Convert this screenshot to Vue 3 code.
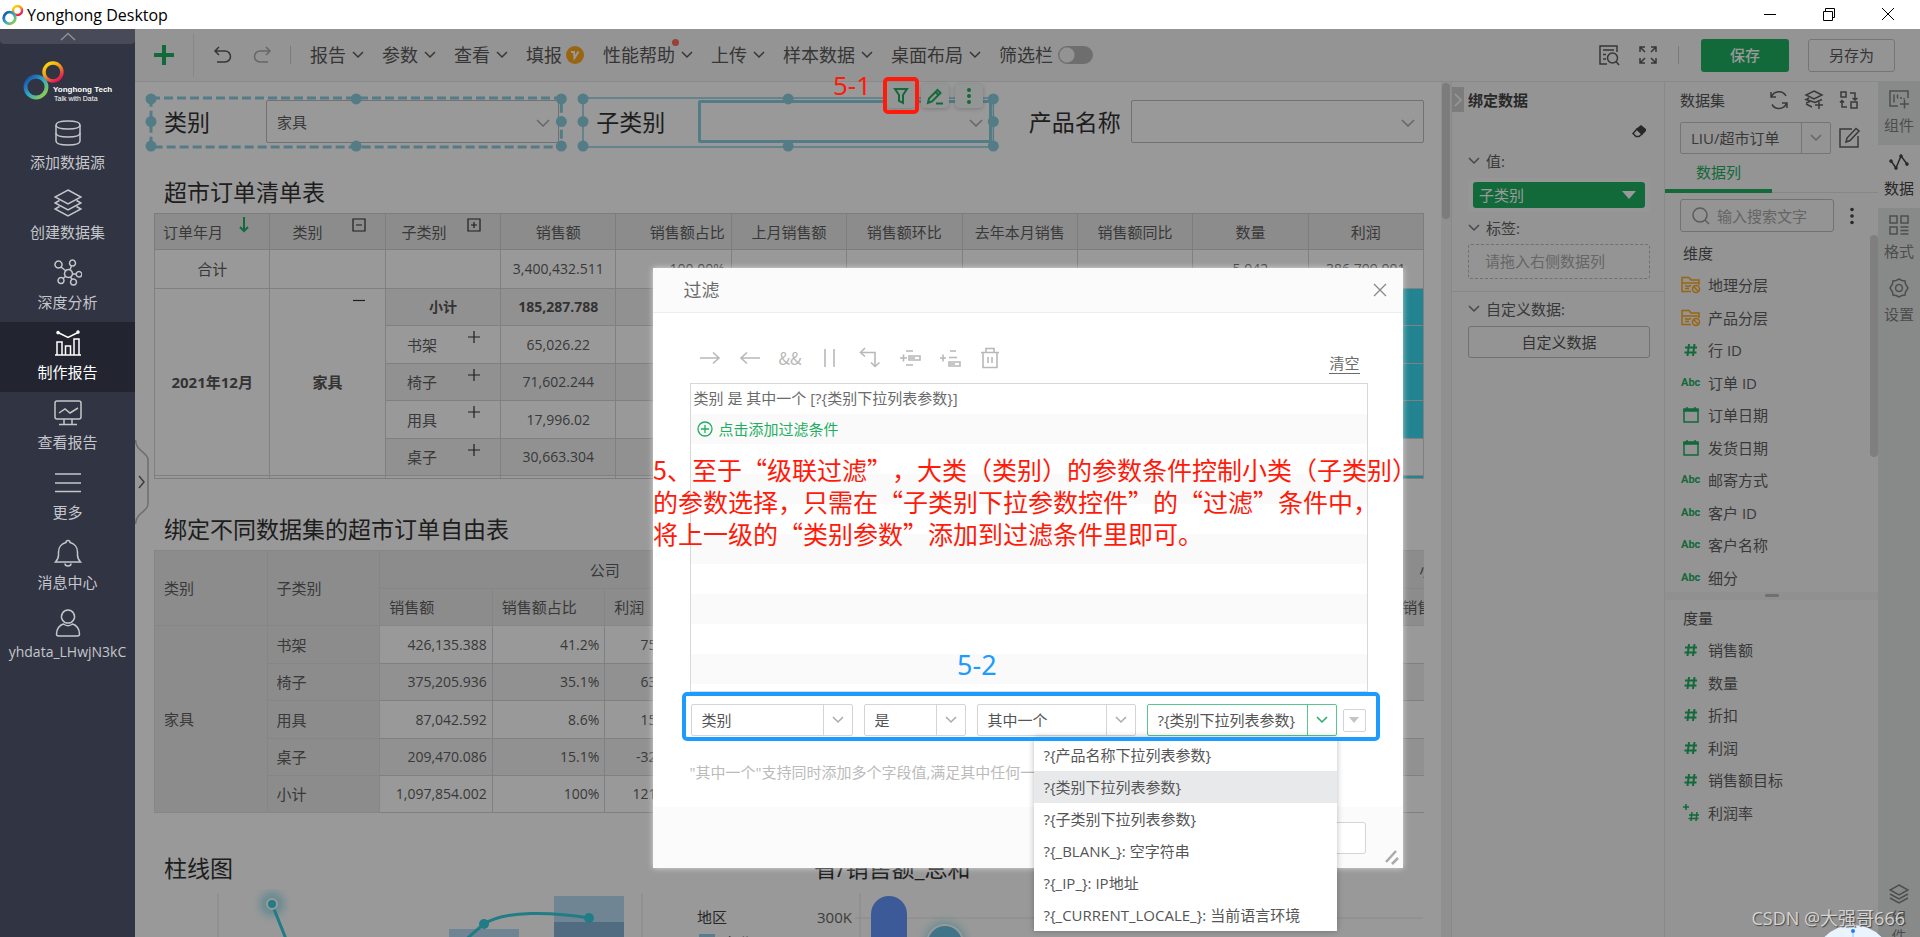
<script setup>
import { ref } from 'vue'

const navItems = [
  { label: '添加数据源', icon: ['M2 6c0-2.6 5-4 12-4s12 1.400 12 4-5 4-12 4S2 8.600 2 6z', 'M2 6v16c0 2.600 5 4 12 4s12-1.400 12-4V6', 'M2 14c0 2.600 5 4 12 4s12-1.400 12-4'] },
  { label: '创建数据集', icon: ['M14 1l13 7-13 7L1 8z', 'M5.500 11.500L1 14l13 7 13-7-4.500-2.500', 'M5.500 17.500L1 20l13 7 13-7-4.500-2.500'] },
  { label: '深度分析', icon: ['M14.500 10.500a4 4 0 1 0 .01 0z', 'M4.500 2a3.500 3.500 0 1 0 .01 0z', 'M18.500 1a3 3 0 1 0 .01 0z', 'M25 12.500a2.800 2.800 0 1 0 .01 0z', 'M7 18.500a3 3 0 1 0 .01 0z', 'M19.500 20a3 3 0 1 0 .01 0z', 'M7 8l5 4M17.500 7l-1.500 3.500M18.500 15h3.500M9 19.500l3-2.500M18 20.500l-1.500-2.500'] },
  { label: '制作报告', active: true, icon: ['M1 26h26', 'M3 26V13h5v13M11.500 26v-9h5v9M20 26V10h5v16', 'M4 3.500l10 5 10-5', 'M4 2.500a1 1 0 1 0 .01 0zM24 2a1 1 0 1 0 .01 0z'] },
  { label: '查看报告', icon: ['M3 2h22a2 2 0 0 1 2 2v14a2 2 0 0 1-2 2H3a2 2 0 0 1-2-2V4a2 2 0 0 1 2-2z', 'M5 14l6-4 5 4 8-5', 'M10 20v5M18 20v5M5 25.500h18'] },
  { label: '更多', icon: ['M1 5h26M1 14h26M1 22.500h26'] },
  { label: '消息中心', icon: ['M1.500 23c2-2 3-3.500 3-7v-3c0-5 3.500-8.500 7.500-9.500a2 2 0 0 1 4 0c4 1 7.500 4.500 7.500 9.500v3c0 3.500 1 5 3 7z', 'M11 24.500a3 2.500 0 0 0 6 0'] },
  { label: 'yhdata_LHwjN3kC', user: true, icon: ['M14 1a6.500 6.500 0 1 0 .01 0z', 'M4.500 27h19a2 2 0 0 0 2-2c0-5-3-9-7-10a7 7 0 0 1-9 0c-4 1-7 5-7 10a2 2 0 0 0 2 2z'] },
]

const menus = [
  { label: '报告' }, { label: '参数' }, { label: '查看' }, { label: '填报', badge: true },
  { label: '性能帮助', dot: true }, { label: '上传' }, { label: '样本数据' }, { label: '桌面布局' },
]

const plainHeads = ['上月销售额', '销售额环比', '去年本月销售', '销售额同比', '数量', '利润']
const orderRows = [
  { name: '书架', sales: '65,026.22' },
  { name: '椅子', sales: '71,602.244' },
  { name: '用具', sales: '17,996.02' },
  { name: '桌子', sales: '30,663.304' },
]
const freeRows = [
  { name: '书架', sales: '426,135.388', share: '41.2%', profit: '75,108.132' },
  { name: '椅子', sales: '375,205.936', share: '35.1%', profit: '63,402.276' },
  { name: '用具', sales: '87,042.592', share: '8.6%', profit: '15,218.672' },
  { name: '桌子', sales: '209,470.086', share: '15.1%', profit: '-32,041.654' },
  { name: '小计', sales: '1,097,854.002', share: '100%', profit: '121,687.426' },
]

const dimensions = [
  ['folder', '地理分层'], ['folder', '产品分层'], ['num', '行 ID'], ['abc', '订单 ID'], ['date', '订单日期'],
  ['date', '发货日期'], ['abc', '邮寄方式'], ['abc', '客户 ID'], ['abc', '客户名称'], ['abc', '细分'],
]
const measures = [
  ['num', '销售额'], ['num', '数量'], ['num', '折扣'], ['num', '利润'], ['num', '销售额目标'], ['calc', '利润率'],
]
const fieldGroups = [
  { title: '维度', items: dimensions, cls: 'dims' },
  { title: '度量', items: measures, cls: 'meas' },
]

const tabs = [
  { label: '组件', icon: ['M9 17H1V2h18v7', 'M5 5.500v8M8.500 5.500v4M12 8v2M15 9v1', 'M11 15h9M15.500 10.500v9'] },
  { label: '数据', active: true, icon: ['M2 9l5 7 5-12 6 8', 'M2 8a1 1 0 1 0 .01 0zM7 15a1 1 0 1 0 .01 0zM12 3a1 1 0 1 0 .01 0zM18 11a1 1 0 1 0 .01 0z'] },
  { label: '格式', icon: ['M1 1h7v7H1zM12 1h7v7h-7zM1 12h7v7H1z', 'M11.500 12h8M11.500 15.500h8M11.500 19h8'] },
  { label: '设置', icon: ['M10 1l3 1.500 3 .5.500 3L19 10l-2.500 4-.5 3-3 .5-3 1.500-3-1.500-3-.5-.5-3L1 10l2.500-4 .5-3 3-.5z', 'M10 6.500a3.500 3.500 0 1 0 .01 0z'] },
]

const tools = [
  { label: '右移', icon: ['M1 11h19M14 5.500l6 5.500-6 5.500'] },
  { label: '左移', icon: ['M21 11H2M8 5.500L2 11l6 5.500'] },
  { label: '与', text: '&&' },
  { label: '或', icon: ['M6 2v18M15 2v18'] },
  { label: '取反', icon: ['M6 1L1.500 5.500 6 9.500', 'M2 5.500h14V19', 'M12 15.500l4 4 4.500-4'] },
  { label: '同级添加', icon: ['M1 11h7M4.500 7.500v7', 'M7 4h7M7 18h7', 'M10 9h11v4H10z', 'M11 11h5'] },
  { label: '下级添加', icon: ['M1 11h6M4 7.500v7', 'M11 4h6M10 10.500h8', 'M10 15h11v4H10z', 'M11 17h5'] },
  { label: '删除', icon: ['M2 5.500h18M7 5V1.500h8V5M4 6v14.500h14V6M9 10v6M13 10v6'] },
]

const options = [
  '?{产品名称下拉列表参数}', '?{类别下拉列表参数}', '?{子类别下拉列表参数}',
  '?{_BLANK_}: 空字符串', '?{_IP_}: IP地址', '?{_CURRENT_LOCALE_}: 当前语言环境',
]
const selected = ref(options[1])
const filterBar = ref(false)
const keyword = ref('')
</script>

<template>
  <div class="app">
    <header class="titlebar">
      <svg class="brand" width="22" height="22" viewBox="0 0 22 22" fill="none">
        <defs>
          <linearGradient id="cool" x1="0" y1="0" x2="1" y2="1"><stop offset="0" stop-color="#1546a8" /><stop offset=".5" stop-color="#2fa9c9" /><stop offset="1" stop-color="#a4d233" /></linearGradient>
          <linearGradient id="warm" x1="0" y1="0" x2=".7" y2="1"><stop offset="0" stop-color="#ffe600" /><stop offset=".5" stop-color="#f39a1d" /><stop offset="1" stop-color="#ea1752" /></linearGradient>
        </defs>
        <circle cx="15.500" cy="6.500" r="4.500" stroke="url(#warm)" stroke-width="2.500" />
        <circle cx="7.500" cy="14" r="5.800" stroke="url(#cool)" stroke-width="2.800" />
      </svg>
      <span class="app-name">Yonghong Desktop</span>
      <div class="win">
        <button aria-label="最小化"><svg width="14" height="14"><path d="M1 7.500h12" /></svg></button>
        <button aria-label="还原"><svg width="14" height="14"><path d="M1.500 4.500h9v9h-9zM3.500 4V1.500h9v9H11" /></svg></button>
        <button aria-label="关闭"><svg width="14" height="14"><path d="M1 1l12 12M13 1L1 13" /></svg></button>
      </div>
    </header>

    <div class="body">
      <nav class="sidebar">
        <button class="nub" aria-label="收起"><svg width="16" height="9"><path d="M1 8l7-6.500L15 8" /></svg></button>
        <div class="logo">
          <svg width="92" height="42" viewBox="0 0 92 42" fill="none">
            <circle cx="30" cy="10" r="9" stroke="url(#warm)" stroke-width="3.500" />
            <circle cx="13" cy="25" r="10.500" stroke="url(#cool)" stroke-width="3.800" />
            <text x="30" y="30" class="logo-name">Yonghong Tech</text>
            <text x="31" y="39" class="logo-sub">Talk with Data</text>
          </svg>
        </div>
        <a v-for="n in navItems" :key="n.label" href="#" class="nav" :class="{ active: n.active, user: n.user }">
          <svg width="28" height="28" viewBox="0 0 28 28"><path v-for="d in n.icon" :key="d" :d="d" /></svg>
          <span>{{ n.label }}</span>
        </a>
      </nav>

      <main class="work">
        <div class="toolbar">
          <button class="add" aria-label="新建"><svg width="20" height="20"><path d="M10 0v20M0 10h20" /></svg></button>
          <i class="sep tall"></i>
          <div class="history">
            <button aria-label="撤销"><svg width="20" height="20"><path d="M6 2L2 6l4 4M2 6h10a5.500 5.500 0 0 1 0 11H4" /></svg></button>
            <button aria-label="重做" class="faint"><svg width="20" height="20"><path d="M14 2l4 4-4 4M18 6H8a5.500 5.500 0 0 0 0 11h8" /></svg></button>
          </div>
          <i class="sep"></i>
          <div class="menus">
            <button v-for="m in menus" :key="m.label" class="menu">
              {{ m.label }}
              <svg v-if="m.badge" class="vip" width="20" height="20"><circle cx="10" cy="10" r="9" /><path d="M6 7h3l.5 6 4-6.500" /></svg>
              <svg v-else width="12" height="8"><path d="M1 1l5 5 5-5" /></svg>
              <i v-if="m.dot" class="dot"></i>
            </button>
            <label class="switch">筛选栏 <input v-model="filterBar" type="checkbox" /></label>
          </div>
          <div class="actions">
            <button aria-label="预览"><svg width="22" height="22"><path d="M9 20H2V2h17v6M5 6h11M5 10.500h3M5 15h3" /><circle cx="14.500" cy="14" r="5" /><path d="M18 17.500l3 3.500" /></svg></button>
            <button aria-label="全屏"><svg width="20" height="20"><path d="M2 7V2h5M2 2l5 5M13 2h5v5M18 2l-5 5M2 13v5h5M2 18l5-5M18 13v5h-5M18 18l-5-5" /></svg></button>
            <i class="sep"></i>
            <button class="save">保存</button>
            <button class="save-as">另存为</button>
          </div>
        </div>

        <div class="panes">
          <section class="canvas">
            <div class="params">
              <div class="param">
                <label for="p1">类别</label>
                <div class="pick"><select id="p1"><option>家具</option></select><svg width="14" height="8"><path d="M1 1l6 6 6-6" /></svg></div>
                <svg class="sel"><rect width="100%" height="100%" class="dash" /><template v-for="x in ['0', '50%', '100%']" :key="x"><circle v-for="y in (x === '50%' ? ['2%', '98%'] : ['2%', '48%', '98%'])" :key="y" :cx="x" :cy="y" r="5.500" /></template></svg>
              </div>
              <div class="param">
                <label for="p2">子类别</label>
                <div class="pick focus"><select id="p2"><option></option></select><svg width="14" height="8"><path d="M1 1l6 6 6-6" /></svg></div>
                <svg class="sel"><rect width="100%" height="100%" /><template v-for="x in ['0', '50%', '100%']" :key="x"><circle v-for="y in (x === '50%' ? ['2%', '98%'] : ['2%', '48%', '98%'])" :key="y" :cx="x" :cy="y" r="5.500" /></template></svg>
                <div class="quick">
                  <button aria-label="过滤"><svg width="18" height="18"><path d="M3 2h12l-4 6v8l-4-2V8z" /></svg></button>
                  <button aria-label="编辑"><svg width="18" height="18"><path d="M2 16l1-4.500L11.500 3l3 3L6 14.500 2 16zM9.500 5l3 3M10 16.500h7" /></svg></button>
                  <button aria-label="更多操作"><svg width="18" height="18" class="fill"><circle cx="9" cy="3" r="2" /><circle cx="9" cy="9" r="2" /><circle cx="9" cy="15" r="2" /></svg></button>
                </div>
              </div>
              <div class="param">
                <label for="p3">产品名称</label>
                <div class="pick"><select id="p3"><option></option></select><svg width="14" height="8"><path d="M1 1l6 6 6-6" /></svg></div>
              </div>
            </div>

            <h2 class="t1">超市订单清单表</h2>
            <div class="clip c1">
              <table class="orders">
                <thead>
                  <tr>
                    <th class="lead">订单年月<svg class="mark arrow" width="12" height="16"><path d="M6 0v14M2 10l4 4 4-4" /></svg></th>
                    <th class="iconed">类别<svg class="mark" width="14" height="14"><path d="M1 1h12v12H1zM4 7h6" /></svg></th>
                    <th class="iconed">子类别<svg class="mark" width="14" height="14"><path d="M1 1h12v12H1zM4 7h6M7 4v6" /></svg></th>
                    <th>销售额</th>
                    <th class="end">销售额占比</th>
                    <th v-for="h in plainHeads" :key="h">{{ h }}</th>
                  </tr>
                </thead>
                <tbody>
                  <tr class="total"><td>合计</td><td></td><td></td><td>3,400,432.511</td><td class="end">100.00%</td><td></td><td></td><td></td><td></td><td>5,942</td><td>386,799.991</td></tr>
                  <tr class="sub">
                    <td rowspan="5" class="strong">2021年12月</td>
                    <td rowspan="5" class="strong">家具<svg class="mark" width="14" height="14"><path d="M1 7.500h12" /></svg></td>
                    <td class="strong alt">小计</td><td class="strong alt">185,287.788</td>
                    <td v-for="i in 6" :key="i" class="alt"></td><td class="teal"></td>
                  </tr>
                  <tr v-for="(r, i) in orderRows" :key="r.name">
                    <td class="item" :class="{ alt: i % 2 }">{{ r.name }}<svg class="mark" width="14" height="14"><path d="M1 7h12M7 1v12" /></svg></td>
                    <td :class="{ alt: i % 2 }">{{ r.sales }}</td>
                    <td v-for="k in 6" :key="k" :class="{ alt: i % 2 }"></td>
                    <td :class="i < 3 ? 'teal' : 'plain'"></td>
                  </tr>
                  <tr><td></td><td></td><td></td><td v-for="k in 7" :key="k"></td><td class="teal"></td></tr>
                </tbody>
              </table>
            </div>

            <h2 class="t2">绑定不同数据集的超市订单自由表</h2>
            <div class="clip c2">
              <table class="free">
                <thead>
                  <tr><th rowspan="2">类别</th><th rowspan="2">子类别</th><th colspan="4" class="mid">公司</th><th colspan="5"></th><th class="mid">小型企业</th></tr>
                  <tr><th>销售额</th><th>销售额占比</th><th>利润</th><th v-for="k in 6" :key="k"></th><th>销售额</th></tr>
                </thead>
                <tbody>
                  <tr v-for="(r, i) in freeRows" :key="r.name" :class="{ odd: i % 2 }">
                    <th v-if="!i" rowspan="5">家具</th><th>{{ r.name }}</th>
                    <td>{{ r.sales }}</td><td>{{ r.share }}</td><td>{{ r.profit }}</td><td v-for="k in 7" :key="k"></td>
                  </tr>
                </tbody>
              </table>
            </div>

            <div class="charts">
              <div>
                <h2>柱线图</h2>
                <svg class="plot">
                  <path d="M67 4v60M491 4v60" class="axis" />
                  <rect x="298" y="40" width="70" height="30" fill="#b9def5" /><rect x="403" y="7" width="70" height="27" fill="#b9def5" /><rect x="403" y="33" width="70" height="40" fill="#88b5d5" />
                  <circle cx="121" cy="15" r="12" class="glow" /><path d="M121 15l20 50M305 60c6-6 22-20 28-25 20-14 70-12 105-6" class="trend" />
                  <circle cx="121" cy="15" r="5" class="pt ring" /><circle cx="333" cy="35" r="5" class="pt" /><circle cx="438" cy="29" r="5" class="pt" />
                </svg>
              </div>
              <div class="second">
                <h2>省/销售额_总和</h2>
                <svg class="plot">
                  <path d="M199 4v60M194 29h568" class="axis" />
                  <text x="36" y="34" class="lg">地区</text><text x="62" y="60" class="lg">东北</text><text x="156" y="34">300K</text>
                  <rect x="38" y="45" width="16" height="16" fill="#98d0e8" />
                  <rect x="210" y="7" width="36" height="70" rx="18" fill="#6696fd" />
                  <circle cx="284" cy="54" r="21" class="glow" /><circle cx="284" cy="54" r="18" class="bubble" />
                </svg>
              </div>
            </div>
          </section>

          <div class="scroll"><i></i></div>

          <aside class="bind">
            <button class="fold" aria-label="收起面板"><svg width="8" height="14"><path d="M1 1l6 6-6 6" /></svg></button>
            <h3>绑定数据</h3>
            <button class="erase" aria-label="清除"><svg width="14" height="14"><path d="M5 4l4-3 5 4-4 4z" class="solid" /><path d="M5 4L1 8.500 4 11.500h3l3-2.500z" /></svg></button>
            <div class="fold-row"><svg width="12" height="8"><path d="M1 1l5 5 5-5" /></svg>值:</div>
            <div class="slot"><button class="pill">子类别<svg width="14" height="8"><path d="M0 0h14L7 8z" /></svg></button></div>
            <div class="fold-row"><svg width="12" height="8"><path d="M1 1l5 5 5-5" /></svg>标签:</div>
            <div class="drop">请拖入右侧数据列</div>
            <hr />
            <div class="fold-row last"><svg width="12" height="8"><path d="M1 1l5 5 5-5" /></svg>自定义数据:</div>
            <button class="custom">自定义数据</button>
          </aside>

          <aside class="dataset">
            <div class="ds-head">
              <span>数据集</span>
              <button aria-label="刷新"><svg width="20" height="20"><path d="M2.500 7A8 8 0 0 1 17 6M17.500 13A8 8 0 0 1 3 14.500M2 2v5h5M18 18v-5h-5" /></svg></button>
              <button aria-label="添加数据集"><svg width="20" height="20"><path d="M10 1l8 4-8 4-8-4zM5 8L2 9.500l9 3 7-3M2 14l6 3M2 13l4-1.500M11 15h8M15 11v8" /></svg></button>
              <button aria-label="切换"><svg width="20" height="20"><path d="M2 2h5v5H2zM12 12h6v6h-6zM11 3h5v7M13.500 8l2.500 2 2.500-2M8 17H3v-6M1 12.500L3 10.500l2 2" /></svg></button>
            </div>
            <div class="ds-pick">
              <div class="combo"><select aria-label="数据集"><option>LIU/超市订单</option></select><span><svg width="12" height="8"><path d="M1 1l5 5 5-5" /></svg></span></div>
              <button aria-label="编辑数据集"><svg width="22" height="22"><path d="M14 2H2v18h18V9M8 15l1-4L18 1.500l3 2.500-9 9.500z" /></svg></button>
            </div>
            <div class="ds-tabs"><button>数据列</button></div>
            <div class="ds-search">
              <div class="box"><svg width="18" height="18"><circle cx="8" cy="8" r="7" /><path d="M13 13l4 4" /></svg><input v-model="keyword" aria-label="搜索" placeholder="输入搜索文字" /></div>
              <button aria-label="更多"><svg width="6" height="18"><circle cx="3" cy="2.500" r="1.800" /><circle cx="3" cy="9" r="1.800" /><circle cx="3" cy="15.500" r="1.800" /></svg></button>
            </div>
            <div v-for="g in fieldGroups" :key="g.title" :class="g.cls">
              <h4>{{ g.title }}</h4>
              <ul>
                <li v-for="[kind, name] in g.items" :key="name">
                  <span class="kind" :class="kind">
                    <svg v-if="kind === 'folder'" width="20" height="18"><path d="M10 15.500H1V1.500h7l2 2.500h8v5M1 7h17M4 9.500l3 1 3-1M4 12.500h4" /><circle cx="15" cy="13" r="3.500" /><path d="M12.500 10.500l5 5" /></svg>
                    <svg v-else-if="kind === 'date'" width="16" height="16"><path d="M1 3h14v12H1z" /><path d="M1 2h14v2H1z" class="solid" /><path d="M4 0v3M12 0v3" /></svg>
                    <b v-else-if="kind === 'abc'">Abc</b>
                    <svg v-else-if="kind === 'num'" width="14" height="14"><path d="M5 1L3.500 13M10.500 1L9 13M1 4.500h12M.5 9.500h12" /></svg>
                    <svg v-else width="18" height="18"><path d="M4 0v6M1 3h6M10 8L9 17M15 8l-1 9M7 11h10M6.500 14.500h10" /></svg>
                  </span>{{ name }}
                </li>
              </ul>
              <i v-if="g.cls === 'dims'" class="thumb"></i>
            </div>
          </aside>

          <nav class="tabs">
            <a v-for="t in tabs" :key="t.label" href="#" :class="{ active: t.active }">
              <svg width="20" height="20" viewBox="0 0 20 20"><path v-for="d in t.icon" :key="d" :d="d" /></svg>{{ t.label }}
            </a>
            <a href="#" class="bottom"><svg width="20" height="20" viewBox="0 0 20 20"><path d="M10 1l9 5-9 5-9-5zM1 10l9 5 9-5M1 14l9 5 9-5" /></svg>组<br />件</a>
          </nav>
        </div>

        <button class="handle" aria-label="展开"><svg width="14" height="84"><path d="M.5 0C1 12 13 12 13 20v44C13 72 1 72 .5 84" /><path d="M4 36l5 6-5 6" class="chev" /></svg></button>

        <div class="mask">
          <div class="dialog" role="dialog" aria-label="过滤">
            <div class="dlg-head">过滤<button aria-label="关闭"><svg width="14" height="14"><path d="M1 1l12 12M13 1L1 13" /></svg></button></div>
            <div class="dlg-body">
              <div class="tools">
                <button v-for="t in tools" :key="t.label" :aria-label="t.label">
                  <span v-if="t.text">{{ t.text }}</span>
                  <svg v-else width="22" height="22"><path v-for="d in t.icon" :key="d" :d="d" /></svg>
                </button>
                <a href="#" class="clear">清空</a>
              </div>
              <div class="conds">
                <div>类别 是 其中一个 [?{类别下拉列表参数}]</div>
                <div><button class="add-cond"><svg width="16" height="16"><circle cx="8" cy="8" r="7" /><path d="M8 4v8M4 8h8" /></svg>点击添加过滤条件</button></div>
                <div v-for="i in 8" :key="i"></div>
              </div>
              <div class="edit">
                <div class="combo w1"><select aria-label="字段"><option>类别</option></select><span><svg width="12" height="8"><path d="M1 1l5 5 5-5" /></svg></span></div>
                <div class="combo w2"><select aria-label="关系"><option>是</option></select><span><svg width="12" height="8"><path d="M1 1l5 5 5-5" /></svg></span></div>
                <div class="combo w3"><select aria-label="运算"><option>其中一个</option></select><span><svg width="12" height="8"><path d="M1 1l5 5 5-5" /></svg></span></div>
                <div class="combo w4 on">
                  <select v-model="selected" aria-label="值"><option v-for="o in options" :key="o">{{ o }}</option></select><span><svg width="12" height="8"><path d="M1 1l5 5 5-5" /></svg></span>
                  <ul class="options"><li v-for="o in options" :key="o" :class="{ cur: o === selected }" @click="selected = o">{{ o }}</li></ul>
                </div>
                <button class="mini" aria-label="类型"><svg width="10" height="6"><path d="M0 0h10L5 6z" /></svg></button>
                <i class="ring-box"></i>
              </div>
              <p class="hint">"其中一个"支持同时添加多个字段值,满足其中任何一个即可</p>
            </div>
            <div class="dlg-foot"><button>取消</button><svg width="16" height="16"><path d="M2 13L12 2M8 15l6-6" /></svg></div>
          </div>
        </div>

        <div class="note step1">5-1</div>
        <i class="frame"></i>
        <div class="note step2">5-2</div>
        <div class="note story">5、至于“级联过滤”，大类（类别）的参数条件控制小类（子类别）<br />的参数选择，只需在“子类别下拉参数控件”的“过滤”条件中，<br />将上一级的“类别参数”添加到过滤条件里即可。</div>
        <svg class="assist" width="80" height="80"><circle cx="40" cy="40" r="40" /><path d="M40 8v12" /><circle cx="40" cy="6" r="2" class="tip" /></svg>
        <div class="watermark">CSDN @大强哥666</div>
      </main>
    </div>
  </div>
</template>

<style>
body { margin: 0; overflow: hidden; }
</style>

<style scoped>
.app { height: 100vh; display: flex; flex-direction: column; overflow: hidden; font: 15px/20px "Open Sans", "Noto Sans CJK SC", sans-serif; color: #606060; background: #fff; }
.app *, .app *::before, .app *::after { box-sizing: border-box; }
button { font: inherit; color: inherit; background: none; border: 0; padding: 0; }
a { color: inherit; text-decoration: none; }
svg { display: block; fill: none; stroke: currentColor; stroke-width: 1.5; flex: none; }
ul { list-style: none; margin: 0; padding: 0; }
h2, h3, h4 { margin: 0; font-weight: 400; }
select, input { font: inherit; color: inherit; }
select { appearance: none; border: 0; outline: 0; background: none; width: 100%; height: 100%; padding: 0 10px; }

.titlebar { height: 29px; flex: none; display: flex; align-items: center; padding-left: 2px; background: #fff; color: #000; }
.brand { stroke: none; }
.app-name { font-size: 16px; margin-left: 3px; flex: 1; }
.win { display: flex; padding-right: 3px; }
.win button { width: 59px; height: 29px; display: grid; place-items: center; padding-bottom: 2px; }
.win svg { stroke-width: 1; }

.body { flex: 1; min-height: 0; display: flex; }
.sidebar { width: 135px; flex: none; background: #313442; color: #c4c6cb; }
.nub { display: grid; place-items: center; width: 100%; height: 15px; background: #484b57; border-radius: 0 0 4px 4px; color: #8d8f98; }
.logo { height: 68px; padding: 18px 0 0 23px; }
.logo text { stroke: none; fill: #fff; font-family: "Liberation Sans", sans-serif; }
.logo-name { font-size: 8px; font-weight: 700; }
.logo-sub { font-size: 7px; }
.logo svg { overflow: visible; }
.nav { height: 70px; display: flex; flex-direction: column; align-items: center; padding-top: 7px; gap: 5px; white-space: nowrap; }
.nav.active { background: #22252f; color: #fff; }
.nav.user { font-size: 14px; }

.work { flex: 1; min-width: 0; position: relative; display: flex; flex-direction: column; overflow: hidden; }
.toolbar { height: 53px; flex: none; display: flex; align-items: center; background: #f7f7f7; border-bottom: 1px solid #e4e4e4; font-size: 18px; color: #5a5a5a; }
.add { color: #1eaf62; margin: 0 19px; }
.add svg { stroke-width: 4; }
.sep { width: 1px; height: 18px; background: #ccc; flex: none; }
.sep.tall { height: 43px; background: #e2e2e2; }
.history { display: flex; gap: 19px; margin: 0 18px 0 19px; }
.faint { color: #aaa; }
.menus { display: flex; gap: 18px; margin-left: 19px; }
.menu { display: flex; align-items: center; gap: 6px; position: relative; }
.vip { margin-left: -3px; stroke: #fff; stroke-width: 2; }
.vip circle { fill: #ffa81c; stroke: none; }
.dot { position: absolute; right: 14px; top: -3px; width: 7px; height: 7px; border-radius: 50%; background: #ff6b5e; }
.switch { display: flex; align-items: center; gap: 5px; line-height: 26px; }
.switch input { appearance: none; margin: 0; width: 35px; height: 18px; border-radius: 9px; background: radial-gradient(circle at 9px 9px, #f5f5f5 7px, #b8b8b8 8px); }
.actions { margin-left: auto; padding-right: 25px; display: flex; align-items: center; font-size: 15px; }
.actions button:nth-child(2) { margin: 0 20px 0 18px; }
.actions .save { width: 88px; height: 33px; margin: 0 19px 0 22px; border-radius: 3px; background: #1eaf62; color: #fff; font-weight: 500; }
.actions .save-as { width: 87px; height: 33px; border: 1px solid #c4c4c4; border-radius: 3px; }

.panes { flex: 1; min-height: 0; display: flex; }
.canvas { flex: 1; min-width: 0; padding: 16px 15px 0 16px; overflow: hidden; background: #fff; }
.canvas h2 { font-size: 23px; line-height: 41px; padding-left: 13px; color: #333; white-space: nowrap; }
.params { display: grid; grid-template-columns: repeat(3, 1fr); gap: 22px; }
.param { position: relative; display: flex; align-items: center; height: 49px; padding: 0 2px 2px 0; }
.param label { width: 115px; padding-left: 13px; font-size: 23px; color: #333; white-space: nowrap; }
.pick { position: relative; flex: 1; height: 43px; border: 1px solid #bdbdbd; border-radius: 2px; }
.pick svg { position: absolute; right: 8px; top: 18px; color: #aaa; }
.pick.focus { border: 3px solid #8ccfe0; }
.pick.focus svg { top: 16px; right: 6px; }
.sel { position: absolute; inset: 0; width: 100%; height: 100%; overflow: visible; pointer-events: none; stroke: #8ccfe0; stroke-width: 1.5; }
.sel circle { fill: #8ccfe0; stroke: none; }
.dash { stroke-width: 3; stroke-dasharray: 9 4; }
.quick { position: absolute; right: 11px; top: -14px; display: flex; gap: 6px; color: #1eaf62; }
.quick button { width: 28px; height: 24px; display: grid; place-items: center; background: #f7f9f9; border-radius: 4px; box-shadow: 0 1px 4px #0003; }
.quick svg { stroke-width: 2; }
.quick .fill { fill: currentColor; stroke: none; }

.canvas .t1 { margin-top: 25px; }
.canvas .t2 { margin-top: 29px; line-height: 42px; }
.clip { margin: 0 2px 0 3px; overflow: hidden; }
.c1 { height: 266px; border-bottom: 1px solid #d0d0d0; }
.c2 { height: 264px; }
table { border-collapse: collapse; table-layout: fixed; width: 100%; white-space: nowrap; }
th, td { padding: 0; font-weight: 400; border: 1px solid #d6d6d6; text-align: center; position: relative; }
td { font-size: 14px; }
.orders th { height: 36px; background: #e9e9e9; border-color: #d0d0d0; }
.orders .total td { height: 39px; }
.orders tbody tr { height: 38px; }
.orders tbody tr:nth-child(even) { height: 37px; }
.orders tr td:first-child, .item { font-size: 15px; }
.orders .lead { text-align: left; padding-left: 8px; }
.orders .iconed { padding-right: 40px; }
.orders .iconed + .iconed { padding-right: 38px; }
.orders .end { text-align: right; padding-right: 6px; }
.orders .item { padding-right: 42px; }
.mark { position: absolute; right: 19px; top: 4px; stroke-width: 1.2; color: #333; }
.arrow { right: 19px; top: 3px; color: #1eaf62; stroke-width: 2; }
.strong { font-weight: 700; color: #555; }
.orders td.strong { font-size: 15px; }
.orders .strong + .strong.alt { font-size: 14px; }
.alt { background: #f2f2f2; }
.teal { background: #3adcf0; }
.free { width: 1352px; border: 1px solid #d6d6d6; }
.free th { background: #e9e9e9; border-color: #e0e0e0; text-align: left; padding-left: 9px; height: 37px; }
.free thead tr:first-child { height: 38px; }
.free .mid { text-align: center; padding: 0; }
.free tbody tr { height: 38px; }
.free tbody tr:nth-child(even), .free tbody tr:last-child { height: 37px; }
.free tbody .odd td { background: #f2f2f2; }
.free td { text-align: right; padding-right: 5px; }

.charts { display: grid; grid-template-columns: 2fr 3fr; margin-top: 34px; }
.second h2 { padding-left: 153px; }
.plot { width: 100%; height: 70px; overflow: hidden; }
.plot text { stroke: none; fill: #666; font-size: 15px; }
.plot rect { stroke: none; }
.plot .lg { fill: #444; }
.plot .bubble { fill: #6cc3e4; stroke: #fff; stroke-width: 2; }
.axis { stroke: #e6e6e6; stroke-width: 1; }
.trend { stroke: #37cfe0; stroke-width: 3; }
.pt { fill: #37cfe0; stroke: none; }
.ring.pt { stroke: #fff; stroke-width: 2; }
.glow { fill: #7fdcec; stroke: none; filter: blur(4px); opacity: .7; }

.scroll { width: 10px; background: #f0f0f0; padding: 1px; flex: none; }
.scroll i { display: block; height: 136px; border-radius: 4px; background: #cfcfcf; }

.bind { position: relative; width: 214px; flex: none; background: #f7f7f7; border-left: 1px solid #e4e4e4; border-right: 1px solid #e4e4e4; padding: 8px 14px 0 16px; }
.fold { position: absolute; left: 0; top: 5px; width: 12px; height: 25px; background: #cfcfcf; color: #fff; display: grid; place-items: center; }
.bind h3 { font-size: 15px; line-height: 20px; font-weight: 700; color: #444; }
.erase { display: block; margin: 15px 4px 0 auto; color: #444; }
.solid { fill: currentColor; }
.fold-row { display: flex; align-items: center; gap: 6px; height: 34px; margin-top: 5px; }
.fold-row svg { color: #777; }
.slot { background: #fbfbfb; padding: 4px 5px; }
.pill { display: flex; align-items: center; justify-content: space-between; width: 100%; height: 26px; padding: 0 9px 0 6px; background: #1eaf62; border-radius: 3px; color: #fff; }
.pill svg, .mini svg { fill: currentColor; stroke: none; }
.slot + .fold-row { margin-top: 0; height: 32px; }
.drop { height: 35px; line-height: 33px; padding-left: 16px; border: 1px dashed #bbb; border-radius: 3px; color: #aaa; }
.bind hr { border: 0; border-top: 1px solid #e2e2e2; margin: 12px -14px 0 -16px; }
.fold-row.last { margin-top: 0; }
.custom { width: 100%; height: 32px; border: 1px solid #bdbdbd; border-radius: 3px; color: #555; }

.dataset { width: 213px; flex: none; background: #f7f7f7; display: flex; flex-direction: column; }
.ds-head { display: flex; align-items: center; gap: 15px; height: 36px; padding: 0 19px 0 15px; }
.ds-head span { flex: 1; color: #555; }
.ds-pick { display: flex; align-items: center; gap: 7px; padding: 4px 18px 0 15px; }
.combo { position: relative; display: flex; height: 32px; border: 1px solid #c4c4c4; border-radius: 2px; }
.combo span { width: 29px; flex: none; display: grid; place-items: center; border-left: 1px solid #c4c4c4; color: #aaa; }
.ds-pick .combo { flex: 1; }
.ds-tabs { height: 39px; border-bottom: 1px solid #e2e2e2; }
.ds-tabs button { width: 107px; height: 39px; border-bottom: 4px solid #1eaf62; color: #1eaf62; }
.ds-search { display: flex; align-items: center; padding: 6px 23px 0 15px; justify-content: space-between; }
.ds-search .box { display: flex; align-items: center; gap: 7px; width: 154px; height: 33px; padding-left: 11px; border: 1px solid #bdbdbd; border-radius: 3px; }
.box svg { color: #999; }
.box input { flex: 1; min-width: 0; border: 0; outline: 0; background: none; padding: 0; }
.box input::placeholder { color: #a8a8a8; opacity: 1; }
.ds-search button svg { fill: #444; stroke: none; }
.dims, .meas { position: relative; overflow: hidden; flex: none; }
.dims { height: 368px; padding-top: 5px; border-bottom: 8px solid #f0f0f0; overflow: visible; }
.dims::after { content: ""; position: absolute; left: 100px; bottom: -5px; width: 14px; height: 3px; background: #bbb; border-radius: 1px; }
.meas { padding-top: 2px; }
.dataset h4 { font-size: 15px; line-height: 32px; padding-left: 18px; color: #555; }
.dataset ul { display: grid; grid-auto-rows: 1fr; padding-left: 16px; height: 325px; }
.dataset .meas ul { height: 195px; }
.dataset li { display: flex; align-items: center; gap: 8px; }
.kind { width: 19px; display: grid; place-items: center; color: #1eaf62; }
.kind b { font: 700 11px/12px Roboto, sans-serif; }
.kind.folder { color: #ffa81c; }
.num svg { stroke-width: 2; }
.thumb { position: absolute; right: 0; top: 3px; width: 8px; height: 222px; border-radius: 4px; background: #d4d4d4; }

.tabs { width: 42px; flex: none; background: #e2e6e4; color: #808080; display: flex; flex-direction: column; }
.tabs a { height: 63px; display: flex; flex-direction: column; align-items: center; gap: 6px; padding-top: 7px; line-height: 20px; }
.tabs .active { background: #f7f7f7; color: #444; }
.tabs .bottom { margin-top: auto; height: 53px; padding-top: 0; gap: 4px; line-height: 19px; }

.handle { position: absolute; left: 0; top: 411px; color: #b4b7bd; }
.handle .chev { stroke: #666; }

.mask { position: absolute; inset: 0; background: rgba(0, 0, 0, .4); display: flex; justify-content: center; align-items: flex-start; padding-top: 239px; }
.dialog { width: 750px; background: #fff; box-shadow: 0 0 6px #ffffffa0; color: #6b6b6b; }
.dlg-head { display: flex; justify-content: space-between; align-items: center; height: 45px; padding: 0 16px 0 31px; background: #fbfbfb; border-bottom: 1px solid #ececf4; font-size: 18px; }
.dlg-head svg { stroke-width: 1.3; color: #888; }
.dlg-body { padding: 32px 23px 0 37px; height: 494px; }
.tools { display: flex; align-items: center; gap: 18px; height: 38px; padding: 0 20px 12px 9px; color: #b8b8b8; }
.tools button { width: 22px; height: 22px; }
.tools span { font: 17px/22px "Noto Sans CJK SC", sans-serif; }
.tools svg { stroke-width: 1.6; }
.clear { margin: 9px 0 0 auto; color: #6b6b6b; border-bottom: 1px solid #6b6b6b; line-height: 19px; align-self: flex-start; flex: none; }
.conds { height: 309px; margin-right: 12px; border: 1px solid #d8d8d8; overflow: hidden; background: #fff; }
.conds div { height: 30px; line-height: 29px; padding-left: 3px; }
.conds div:nth-child(even) { background: #fafafa; }
.add-cond { display: flex; align-items: center; gap: 6px; height: 30px; padding-left: 3px; color: #1eaf62; }
.add-cond svg { stroke-width: 1.3; }
.edit { position: relative; display: flex; align-items: center; gap: 11px; padding: 12px 14px 0 1px; color: #555; }
.edit .combo, .edit .combo span { border-color: #d4d4d4; }
.w1 { width: 162px; }
.w2 { width: 102px; }
.w3 { flex: 1; }
.w4 { width: 190px; }
.edit .on, .edit .on span { border-color: #5cc48c; color: #1eaf62; }
.edit .on select { color: #555; }
.mini { width: 23px; height: 23px; margin-left: -5px; border: 1px solid #d4d4d4; border-radius: 2px; display: grid; place-items: center; color: #c4c4c4; }
.ring-box { position: absolute; inset: 0 0 -5px -8px; border: 4px solid #1e9bff; border-radius: 5px; z-index: 3; pointer-events: none; }
.options { position: absolute; right: -1px; top: 32px; width: 303px; padding-top: 2px; background: #fff; color: #555; box-shadow: 0 0 6px #0004; z-index: 2; }
.options li { height: 32px; line-height: 32px; padding-left: 10px; white-space: nowrap; }
.options .cur { background: #e8e9eb; }
.hint { margin: 26px 0 0; color: #bbb; white-space: nowrap; }
.dlg-foot { display: flex; justify-content: flex-end; height: 61px; padding: 15px 3px 0 0; background: #fbfbfb; }
.dlg-foot button { width: 88px; height: 32px; border: 1px solid #d4d4d4; border-radius: 3px; background: #fff; margin-right: 18px; }
.dlg-foot svg { margin-top: 27px; color: #aaa; stroke-width: 2.5; }

.note { position: absolute; color: #ff1a0a; font-family: "Noto Sans CJK SC", sans-serif; text-spacing-trim: space-all; white-space: nowrap; z-index: 4; }
.step1 { left: 698px; top: 40px; font: 26px/32px "Noto Sans", sans-serif; }
.step2 { left: 822px; top: 620px; font: 27px/32px "Noto Sans", sans-serif; color: #1e9bff; }
.story { left: 518px; top: 424px; font-size: 25px; line-height: 32px; }
.frame { position: absolute; left: 748px; top: 48px; width: 36px; height: 37px; border: 4px solid #ff1a0a; border-radius: 5px; }
.assist { position: absolute; right: 27px; bottom: -68px; fill: #eaf4ff; stroke: none; }
.assist path { stroke: #b8dcff; stroke-width: 2; }
.assist .tip { fill: #1a7bff; }
.watermark { position: absolute; right: 15px; bottom: 6px; font: 18px/26px "Open Sans", "Noto Sans CJK SC", sans-serif; color: #d4d4d4; text-shadow: 1px 1px 1px #444; }
</style>
